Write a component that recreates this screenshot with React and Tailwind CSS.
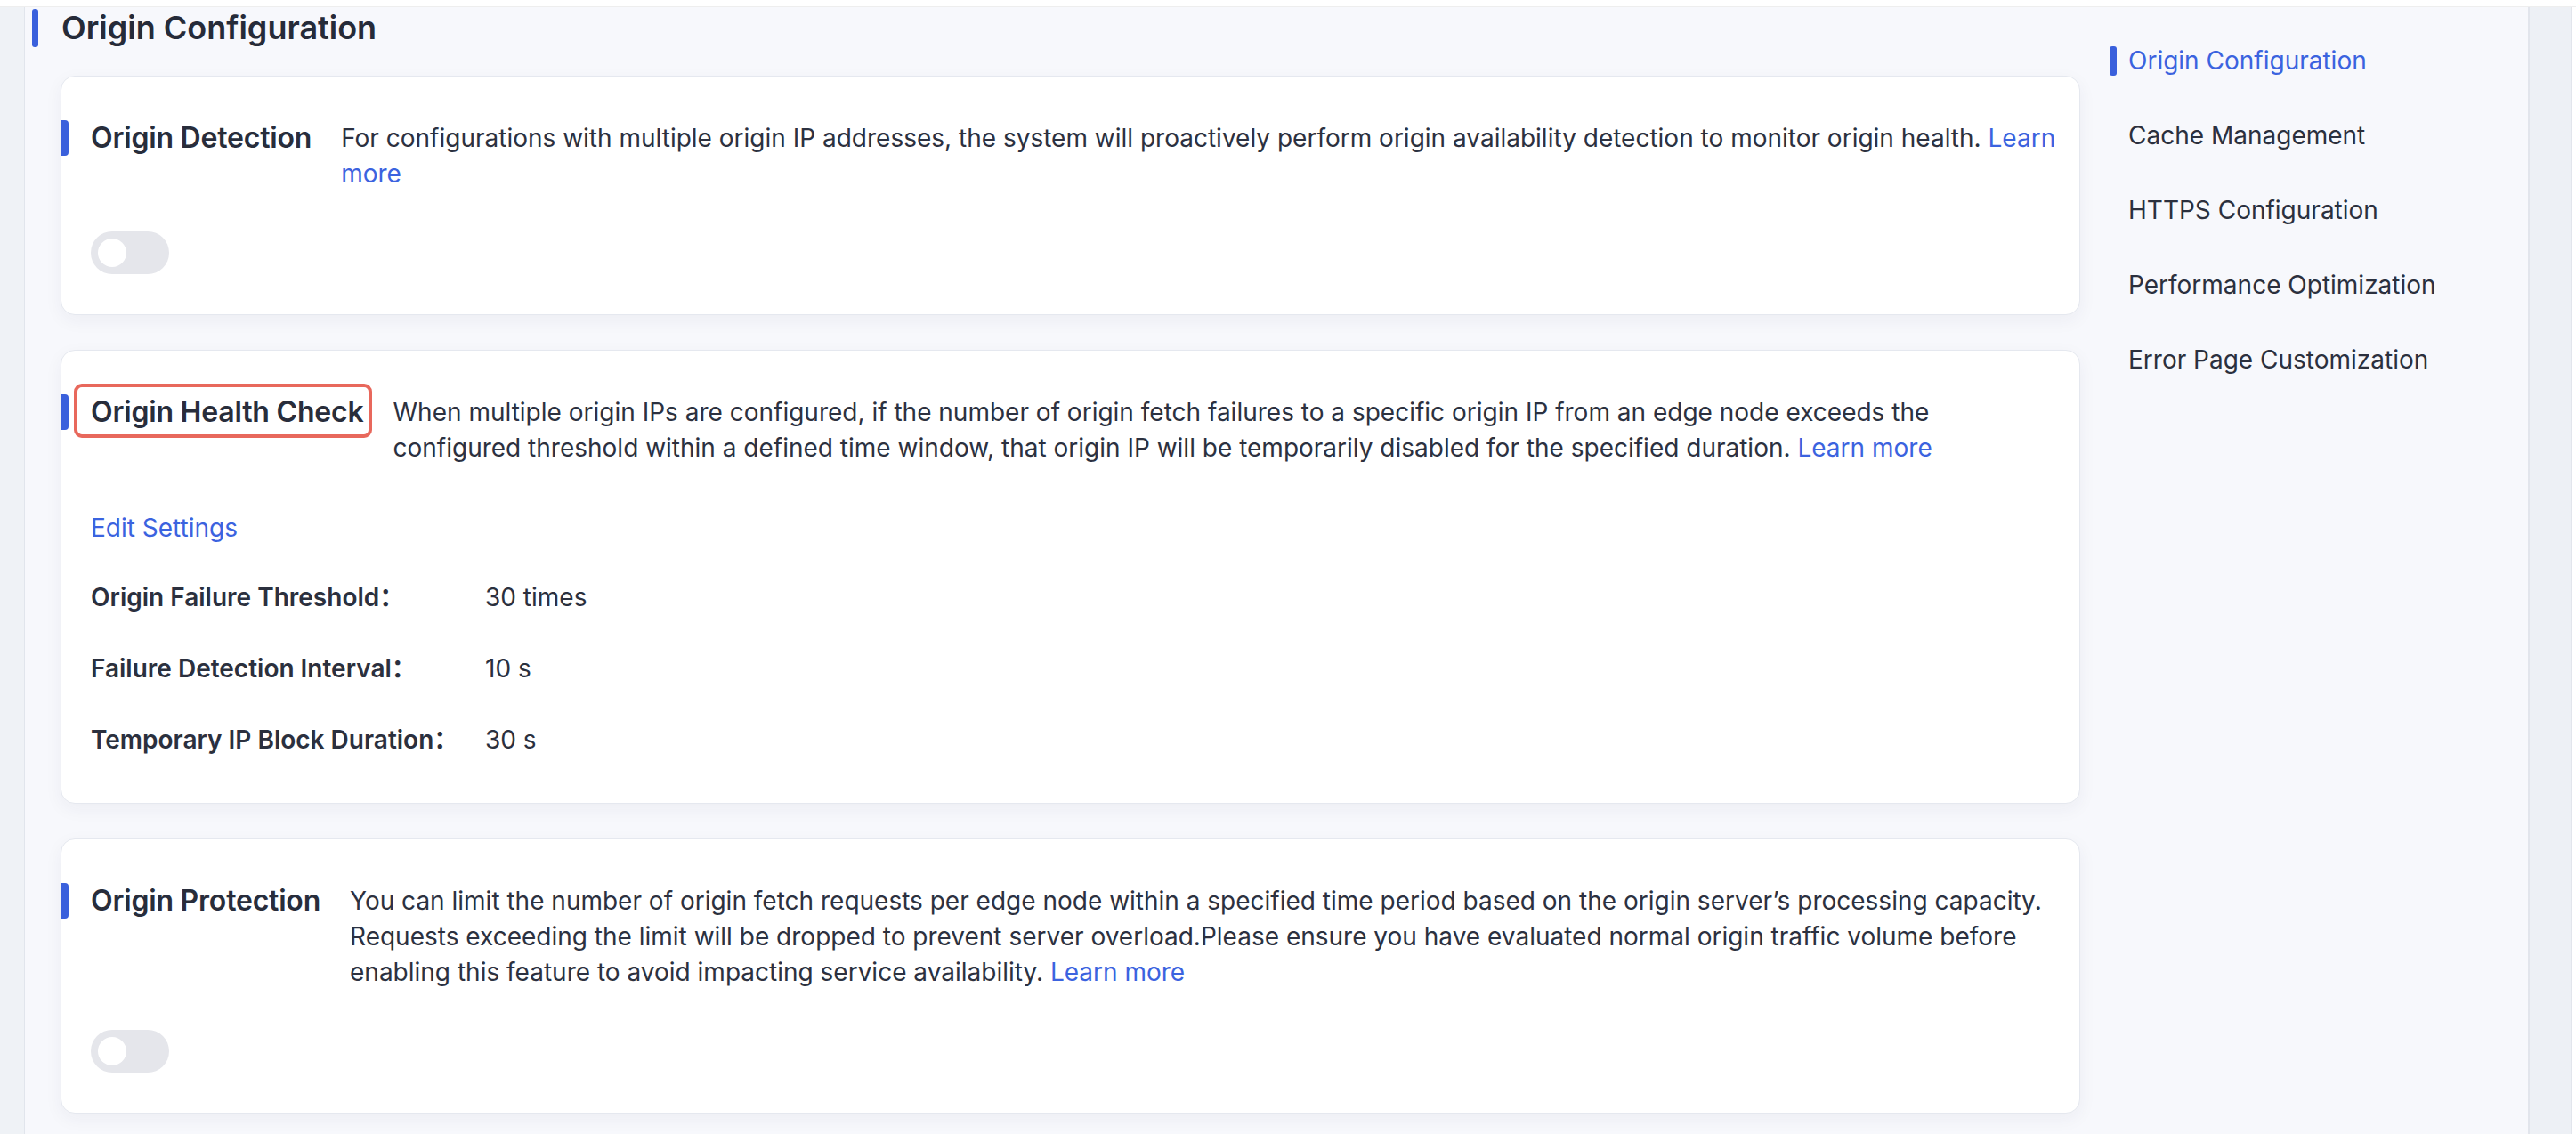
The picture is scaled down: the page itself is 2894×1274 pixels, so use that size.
import React from 'react'

const NAV = [
  'Origin Configuration',
  'Cache Management',
  'HTTPS Configuration',
  'Performance Optimization',
  'Error Page Customization',
]

const Toggle = () => (
  <div className="w-[88px] h-[48px] rounded-full bg-[#e5e6eb] flex items-center pl-[8px]">
    <div className="w-[32px] h-[32px] rounded-full bg-white" />
  </div>
)

const Card = ({ title, highlight, children, body }) => (
  <div className="bg-white rounded-[16px] border border-[#e5e8ef] shadow-[0_6px_20px_rgba(30,40,80,0.05)] pt-[49px] pb-[45px] pr-[26px]">
    <div className="flex items-start">
      <div className="w-[8px] h-[40px] rounded-r-[4px] bg-[#3a60dc] shrink-0" />
      <div className="relative ml-[25px] shrink-0">
        <span className="text-[32px] leading-[40px] font-semibold text-[#282d3b] whitespace-nowrap tracking-[-0.2px]">
          {title}
        </span>
        {highlight && (
          <div className="absolute -left-[19px] -right-[9px] -top-[12px] -bottom-[9px] border-[4px] border-[#e8685c] rounded-[9px]" />
        )}
      </div>
      <p className="ml-[33px] flex-1 text-[28px] leading-[40px] text-[#2c3140]">{children}</p>
    </div>
    <div className="pl-[33px]">{body}</div>
  </div>
)

const Learn = ({ children }) => <span className="text-[#3b63df]">{children}</span>

const Row = ({ label, value }) => (
  <div className="flex text-[28px] leading-[40px] text-[#2b303e]">
    <span className="w-[443px] font-semibold">{label}</span>
    <span>{value}</span>
  </div>
)

export default function App() {
  return (
    <div className="w-[2894px] h-screen overflow-hidden bg-white font-['Inter','Noto_Sans_CJK_SC',sans-serif] flex flex-col">
      <div className="h-[8px] bg-white border-b border-[#eeeeee] shrink-0" />
      <div className="flex flex-1">
        <div className="w-[28px] bg-[#eff2f6] border-r border-[#e1e5ec]" />
        <main className="flex-1 flex bg-[#f7f8fc]">
          <div className="w-[2309px] shrink-0">
            <div className="flex items-center mt-[2px] pl-[8px] h-[43px]">
              <div className="w-[7px] h-[43px] rounded-[3px] bg-[#3a60dc]" />
              <h1 className="ml-[26px] text-[36px] leading-[43px] font-semibold text-[#262b39]">
                Origin Configuration
              </h1>
            </div>

            <div className="ml-[40px] mt-[32px] flex flex-col gap-[39px]">
              <Card title="Origin Detection" body={<div className="mt-[45px]"><Toggle /></div>}>
                For configurations with multiple origin IP addresses, the system will proactively perform origin
                availability detection to monitor origin health. <Learn>Learn more</Learn>
              </Card>

              <Card
                title="Origin Health Check"
                highlight
                body={
                  <div className="pb-[6px]">
                    <div className="mt-[50px] text-[28px] leading-[40px] text-[#3b63df]">Edit Settings</div>
                    <div className="mt-[38px] flex flex-col gap-[40px]">
                      <Row label="Origin Failure Threshold：" value="30 times" />
                      <Row label="Failure Detection Interval：" value="10 s" />
                      <Row label="Temporary IP Block Duration：" value="30 s" />
                    </div>
                  </div>
                }
              >
                When multiple origin IPs are configured, if the number of origin fetch failures to a specific origin IP
                from an edge node exceeds the configured threshold within a defined time window, that origin IP will be
                temporarily disabled for the specified duration. <Learn>Learn more</Learn>
              </Card>

              <Card title="Origin Protection" body={<div className="mt-[45px]"><Toggle /></div>}>
                You can limit the number of origin fetch requests per edge node within a specified time period based on
                the origin server’s processing capacity. Requests exceeding the limit will be dropped to prevent server
                overload.Please ensure you have evaluated normal origin traffic volume before enabling this feature to
                avoid impacting service availability. <Learn>Learn more</Learn>
              </Card>
            </div>
          </div>

          <nav className="flex-1 pl-[33px] pt-[40px] flex flex-col gap-[44px]">
            {NAV.map((item, i) => (
              <div key={item} className="flex items-center h-[40px]">
                <div className={`w-[8px] h-[33px] rounded-[3px] ${i === 0 ? 'bg-[#3a60dc]' : 'bg-transparent'}`} />
                <span
                  className={`ml-[13px] text-[28px] leading-[40px] ${i === 0 ? 'text-[#3b63df]' : 'text-[#2b303e]'}`}
                >
                  {item}
                </span>
              </div>
            ))}
          </nav>
        </main>
        <div className="w-[50px] bg-[#edf0f5] border-l-2 border-r-2 border-[#e2e5ec]" />
        <div className="w-[4px] bg-white" />
      </div>
    </div>
  )
}
